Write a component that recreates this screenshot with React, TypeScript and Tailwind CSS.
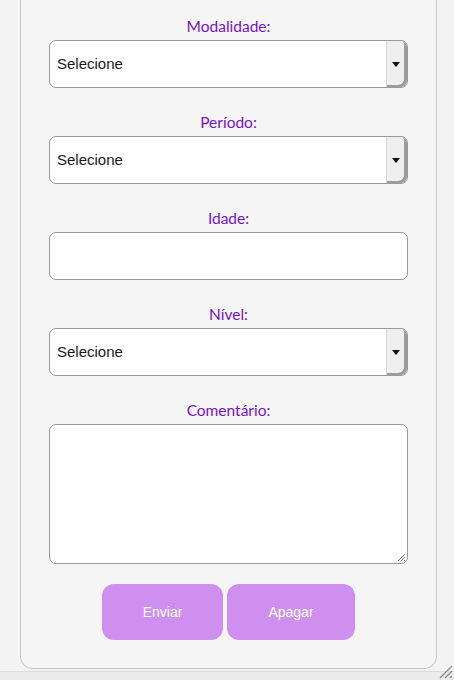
import React from "react";

const labelCls =
  "block text-center text-[15.5px] leading-[24px] mb-[2px] text-[#7614c2] font-['Lato',_sans-serif] font-normal";

function SelectBox() {
  return (
    <div className="relative flex h-[48px] w-full items-center rounded-[7px] border border-[#9a9a9a] bg-white">
      <span className="pl-[7px] text-[15px] text-[#1a1a1a] font-['Liberation_Sans',_Arial,_sans-serif]">
        Selecione
      </span>
      <div className="ml-auto flex h-full w-[21px] items-center justify-center rounded-r-[6px] border-l border-[#d8d8d8] bg-[#efefef] shadow-[inset_-3px_-2px_0_#9c9c9c]">
        <svg width="8" height="5" viewBox="0 0 8 5" className="mr-[2px]">
          <path d="M0 0 L8 0 L4 5 Z" fill="#111" />
        </svg>
      </div>
    </div>
  );
}

function Field({ label, children }: { label: string; children: React.ReactNode }) {
  return (
    <div className="mt-[22px] first:mt-0">
      <label className={labelCls}>{label}</label>
      {children}
    </div>
  );
}

export default function App() {
  return (
    <div className="relative flex h-[680px] w-[454px] flex-col overflow-hidden bg-[#f3f3f3]">
      <div className="flex h-[672px] shrink-0 flex-col overflow-hidden border-b border-[#dcdcdc] pl-[20px] pr-[17px]">
        <div className="-mt-[10px] h-[679px] shrink-0 rounded-b-[13px] border-x-[1.5px] border-b-[1.5px] border-[#c9c9c9] bg-[#f5f5f5] px-[28px] pt-[24px]">
          <Field label="Modalidade:">
            <SelectBox />
          </Field>
          <Field label="Período:">
            <SelectBox />
          </Field>
          <Field label="Idade:">
            <div className="h-[48px] w-full rounded-[7px] border border-[#9a9a9a] bg-white" />
          </Field>
          <Field label="Nível:">
            <SelectBox />
          </Field>
          <Field label="Comentário:">
            <div className="relative h-[140px] w-full rounded-[7px] border border-[#9a9a9a] bg-white">
              <svg width="10" height="10" viewBox="0 0 10 10" className="absolute bottom-[1px] right-[1px]">
                <path d="M9 2 L2 9 M9 5 L5 9 M9 8 L8 9" stroke="#777" strokeWidth="1" />
              </svg>
            </div>
          </Field>
          <div className="mt-[20px] flex justify-center gap-[4px] font-['Liberation_Sans',_Arial,_sans-serif]">
            <button className="h-[56px] w-[121px] rounded-[12px] bg-[#cf8fef] text-[14px] text-white">Enviar</button>
            <button className="h-[56px] w-[128px] rounded-[12px] bg-[#cf8fef] text-[14px] text-white">Apagar</button>
          </div>
        </div>
      </div>
      <div className="h-[8px] shrink-0 bg-[#ececec]" />
      <svg width="16" height="16" viewBox="0 0 16 16" className="absolute bottom-[1px] right-[1px]">
        <path d="M15 3 L3 15 M15 8 L8 15 M15 13 L13 15" stroke="#8a8a8a" strokeWidth="1.3" />
      </svg>
    </div>
  );
}
